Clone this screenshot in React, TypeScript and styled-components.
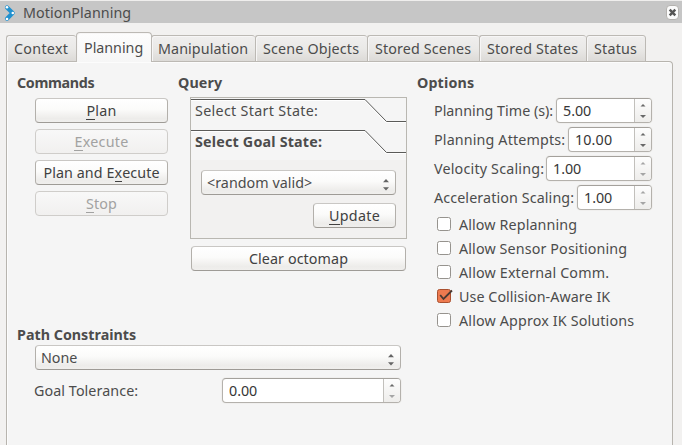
import React, { useLayoutEffect, useRef, useState } from "react";
import styled, { createGlobalStyle, css } from "styled-components";

const Global = createGlobalStyle`
  * { box-sizing: border-box; }
  body { margin: 0; background: #f2f1f0; overflow: hidden; }
`;

const Window = styled.div`
  width: 682px;
  height: 445px;
  display: flex;
  flex-direction: column;
  overflow: hidden;
  background: #f2f1f0;
  color: #4c4c4c;
  font: 14.3px/17px "Noto Sans", "Open Sans", sans-serif;
`;

const Label = styled.span<{ $w: number; $bold?: boolean }>`
  display: block;
  flex: none;
  width: ${(p) => p.$w}px;
  height: 17px;
  white-space: nowrap;
  font-weight: ${(p) => (p.$bold ? 700 : 400)};
`;

const Mnemonic = styled.span`
  box-shadow: 0 1px 0 currentColor;
  display: inline-block;
  height: 17px;
  line-height: 17px;
`;

/* Label whose letters are tracked so that the text fills its given width. */
function Text({ text, w, bold, hot }: { text: string; w: number; bold?: boolean; hot?: number }) {
  const ref = useRef<HTMLSpanElement>(null);
  const [tracking, setTracking] = useState(0);
  useLayoutEffect(() => {
    if (ref.current) {
      const natural = ref.current.getBoundingClientRect().width;
      setTracking((w - 0.8 - natural) / text.length);
    }
  }, [text, w]);
  return (
    <Label $w={w} $bold={bold}>
      <span ref={ref} style={{ letterSpacing: tracking }}>
        {hot === undefined ? text : (
          <>{text.slice(0, hot)}<Mnemonic>{text[hot]}</Mnemonic>{text.slice(hot + 1)}</>
        )}
      </span>
    </Label>
  );
}

const TitleBar = styled.header`
  height: 23px;
  flex: none;
  display: flex;
  align-items: center;
  padding: 1px 3px 0 4px;
  border-top: 1px solid #efeeed;
  background: #c6c6c6;
`;
const TitleText = styled.div`
  flex: 1;
  margin: -1px 0 0 7px;
`;
const CloseButton = styled.button`
  width: 13px;
  height: 15px;
  padding: 0;
  display: grid;
  place-items: center;
  border: 1px solid #b4b2af;
  border-radius: 4px;
  background: #fbfbfb;
  margin-top: -1px;
`;

const TabBar = styled.nav`
  display: flex;
  align-items: flex-end;
  height: 39px;
  flex: none;
  padding-left: 6px;
  position: relative;
  z-index: 1;
  margin-bottom: -1px;
`;
const Tab = styled.div<{ $w: number; $active?: boolean; $last?: boolean }>`
  width: ${(p) => p.$w}px;
  height: 27px;
  display: flex;
  justify-content: center;
  padding-top: 4px;
  border: 1px solid #bcb9b4;
  border-right-width: ${(p) => (p.$last ? 1 : 0)}px;
  border-radius: 3px 3px 0 0;
  background: linear-gradient(#f0efee, #eae9e7 50%, #dcdad7);
  box-shadow: inset 1px 1px 0 #f7f6f6;
  ${(p) => p.$active && css`
    height: 30px;
    padding-top: 6px;
    border-right-width: 1px;
    border-bottom: 0;
    border-radius: 4px 4px 0 0;
    background: linear-gradient(#fdfdfd, #f6f6f6);
    margin-right: -1px;
    z-index: 1;
  `}
`;

const Panel = styled.main`
  flex: 1;
  margin: 0 9px 0 6px;
  border: 1px solid #b7b4ae;
  border-bottom: 0;
  border-radius: 0 4px 0 0;
  background: #f5f5f5;
  box-shadow: inset 1px 1px 0 #fcfcfc;
  padding: 12px 0 0 10px;
`;
const Columns = styled.div`
  display: grid;
  grid-template-columns: 161px 239px 1fr;
  height: 252px;
`;
const Column = styled.section`
  display: flex;
  flex-direction: column;
  align-items: flex-start;
`;
const CommandList = styled.div`
  display: flex;
  flex-direction: column;
  gap: 6px;
  margin: 7px 0 0 18px;
`;
const raised = css`
  border: 1px solid #b3b0ab;
  border-top-color: #c9c7c4;
  border-bottom-color: #9e9b96;
  border-radius: 4px;
  background: linear-gradient(#fff, #fbfbfa 45%, #edecea 85%, #f0efed);
`;
const Button = styled.button<{ $w: number }>`
  ${raised}
  width: ${(p) => p.$w}px;
  height: 25px;
  flex: none;
  display: flex;
  justify-content: center;
  padding: 3px 0 0;
  color: #414141;
  font: inherit;
  &:disabled {
    color: #a2a2a1;
    border-color: #cfcdca;
    background: linear-gradient(#f8f8f8, #f1f0ef);
  }
`;

const StateBox = styled.div`
  width: 217px;
  height: 142px;
  margin: 6px 0 7px 12px;
  border: 1px solid #b9b7b1;
  background: #f2f1f0;
`;
const StateHeader = styled.div`
  height: 31px;
  display: flex;
  background: #f5f5f5;
`;
const HeaderLabel = styled.div`
  padding: 4px 0 0 4px;
  width: 0;
  z-index: 1;
`;
const HeaderEdge = styled.svg`
  display: block;
  flex: none;
  width: 215px;
  height: 26px;
  margin-left: -4px;
`;
const StateBody = styled.div`
  display: flex;
  flex-direction: column;
  align-items: flex-end;
  gap: 8px;
  padding: 10px 10px 0 0;
`;
const Indent = styled.div`
  padding-left: 13px;
`;

const Select = styled.div<{ $w: number }>`
  ${raised}
  width: ${(p) => p.$w}px;
  height: 25px;
  display: flex;
  justify-content: space-between;
  padding: 3px 5px 0 5px;
`;
const Arrows = styled.svg`
  width: 8px;
  height: 14px;
  margin-top: 4px;
  flex: none;
`;

const OptionRows = styled.div`
  display: flex;
  flex-direction: column;
  gap: 4px;
  margin: 7px 0 6px 17px;
  width: 218px;
`;
const Row = styled.div`
  display: flex;
  justify-content: space-between;
  height: 25px;
  & > span { margin-top: 4px; }
`;
const Spin = styled.div<{ $w: number }>`
  width: ${(p) => p.$w}px;
  height: 25px;
  display: flex;
  justify-content: space-between;
  padding: 3px 0 0 6px;
  color: #363636;
  border: 1px solid #b4b1ac;
  border-top-color: #a4a19c;
  border-radius: 4px;
  background: #fff;
  box-shadow: 0 0 0 1px #f0efee;
`;
const Stepper = styled.svg`
  width: 17px;
  height: 23px;
  margin-top: -3px;
  flex: none;
  border-left: 1px solid #c2c0bc;
  border-radius: 0 3px 3px 0;
  background: linear-gradient(#fdfdfd, #eeedeb);
`;

const Checks = styled.div`
  display: flex;
  flex-direction: column;
  gap: 7px;
  margin-left: 20px;
`;
const CheckRow = styled.label`
  display: flex;
  height: 17px;
  gap: 6px;
`;
const CheckBox = styled.svg`
  width: 16px;
  height: 16px;
  margin-top: 1px;
  flex: none;
`;
const ToleranceRow = styled.div`
  display: flex;
  justify-content: space-between;
  width: 367px;
  margin: 8px 0 0 17px;
  & > span { margin-top: 4px; }
`;
const PathSelect = styled.div`
  margin: 2px 0 0 18px;
`;

function UpDown() {
  return (
    <Arrows viewBox="0 0 8 14">
      <path d="M1 4.2 4 1 7 4.2ZM1 9.2 4 12.4 7 9.2Z" fill="#656565" />
    </Arrows>
  );
}

function SpinBox({ w, value, tw, up = "#686868", down = "#686868" }: { w: number; value: string; tw: number; up?: string; down?: string }) {
  return (
    <Spin $w={w}>
      <Text text={value} w={tw} />
      <Stepper viewBox="0 0 16 23">
        <path d="M5.5 7.5 8 5 10.5 7.5Z" fill={up} />
        <path d="M5 16 8 19 11 16Z" fill={down} />
      </Stepper>
    </Spin>
  );
}

function Edge() {
  return (
    <HeaderEdge viewBox="0 0 215 26">
      <path d="M0 2.5H173.5L195 24.5H215" fill="none" stroke="#fff" />
      <path d="M0 1.5H174L195.5 23.5H215" fill="none" stroke="#5b5b59" />
    </HeaderEdge>
  );
}

const tabs = [
  { name: "Context", w: 70, tw: 55 },
  { name: "Planning", w: 76, tw: 60, active: true },
  { name: "Manipulation", w: 104, tw: 91 },
  { name: "Scene Objects", w: 112, tw: 97 },
  { name: "Stored Scenes", w: 112, tw: 97 },
  { name: "Stored States", w: 107, tw: 92 },
  { name: "Status", w: 60, tw: 44 },
];
const commands = [
  { name: "Plan", tw: 31, hot: 0, on: true },
  { name: "Execute", tw: 55, hot: 0, on: false },
  { name: "Plan and Execute", tw: 117, hot: 10, on: true },
  { name: "Stop", tw: 32, hot: 0, on: false },
];
const spins = [
  { name: "Planning Time (s):", tw: 120, w: 96, value: "5.00", vw: 29 },
  { name: "Planning Attempts:", tw: 132, w: 84, value: "10.00", vw: 38 },
  { name: "Velocity Scaling:", tw: 111, w: 106, value: "1.00", vw: 29, up: "#a5a5a5", down: "#a5a5a5" },
  { name: "Acceleration Scaling:", tw: 141, w: 75, value: "1.00", vw: 29, up: "#a5a5a5", down: "#a5a5a5" },
];
const checks = [
  { name: "Allow Replanning", tw: 119 },
  { name: "Allow Sensor Positioning", tw: 169 },
  { name: "Allow External Comm.", tw: 151 },
  { name: "Use Collision-Aware IK", tw: 152, on: true },
  { name: "Allow Approx IK Solutions", tw: 176 },
];

export default function App() {
  return (
    <Window>
      <Global />
      <TitleBar>
        <svg width="12" height="18" viewBox="0 0 12 18">
          <path d="M3 3.4 8.6 9 3 14.8" fill="none" stroke="#2191cf" strokeWidth="4.2" strokeLinecap="round" strokeLinejoin="round" />
          <circle cx="3" cy="3.2" r="1.3" fill="#fff" />
          <circle cx="8.8" cy="9" r="1.3" fill="#fff" />
          <circle cx="3" cy="15" r="1.3" fill="#fff" />
        </svg>
        <TitleText><Text text="MotionPlanning" w={109} /></TitleText>
        <CloseButton aria-label="Close">
          <svg width="9" height="9" viewBox="0 0 9 9"><path d="m1.7 1.7 5.6 5.6m0-5.6-5.6 5.6" stroke="#555" strokeWidth="2.5" /></svg>
        </CloseButton>
      </TitleBar>
      <TabBar>
        {tabs.map((t, i) => (
          <Tab key={t.name} $w={t.w} $active={t.active} $last={i === tabs.length - 1}><Text text={t.name} w={t.tw} /></Tab>
        ))}
      </TabBar>
      <Panel>
        <Columns>
          <Column>
            <Text text="Commands" w={78} bold />
            <CommandList>
              {commands.map((c) => (
                <Button key={c.name} $w={133} disabled={!c.on}><Text text={c.name} w={c.tw} hot={c.hot} /></Button>
              ))}
            </CommandList>
          </Column>
          <Column>
            <Text text="Query" w={45} bold />
            <StateBox>
              <StateHeader>
                <HeaderLabel><Text text="Select Start State:" w={124} /></HeaderLabel>
                <Edge />
              </StateHeader>
              <StateHeader>
                <HeaderLabel><Text text="Select Goal State:" w={128} bold /></HeaderLabel>
                <Edge />
              </StateHeader>
              <StateBody>
                <Select $w={195}><Text text="<random valid>" w={106} /><UpDown /></Select>
                <Button $w={83}><Text text="Update" w={52} hot={0} /></Button>
              </StateBody>
            </StateBox>
            <Indent><Button $w={215}><Text text="Clear octomap" w={100} /></Button></Indent>
          </Column>
          <Column>
            <Text text="Options" w={58} bold />
            <OptionRows>
              {spins.map((s) => (
                <Row key={s.name}>
                  <Text text={s.name} w={s.tw} />
                  <SpinBox w={s.w} value={s.value} tw={s.vw} up={s.up} down={s.down} />
                </Row>
              ))}
            </OptionRows>
            <Checks>
              {checks.map((c) => (
                <CheckRow key={c.name}>
                  <CheckBox viewBox="0 0 16 16">
                    <rect x="0.5" y="0.5" width="13" height="13" rx="2" fill={c.on ? "#ee7a4f" : "#fff"} stroke={c.on ? "#a9502f" : "#96938e"} />
                    {c.on && <path d="M3.2 6 6.5 10 15 1.5" fill="none" stroke="#4a3a33" strokeWidth="1.8" />}
                  </CheckBox>
                  <Text text={c.name} w={c.tw} />
                </CheckRow>
              ))}
            </Checks>
          </Column>
        </Columns>
        <Text text="Path Constraints" w={120} bold />
        <PathSelect><Select $w={366}><Text text="None" w={37} /><UpDown /></Select></PathSelect>
        <ToleranceRow>
          <Text text="Goal Tolerance:" w={105} />
          <SpinBox w={179} value="0.00" tw={29} down="#a5a5a5" />
        </ToleranceRow>
      </Panel>
    </Window>
  );
}
